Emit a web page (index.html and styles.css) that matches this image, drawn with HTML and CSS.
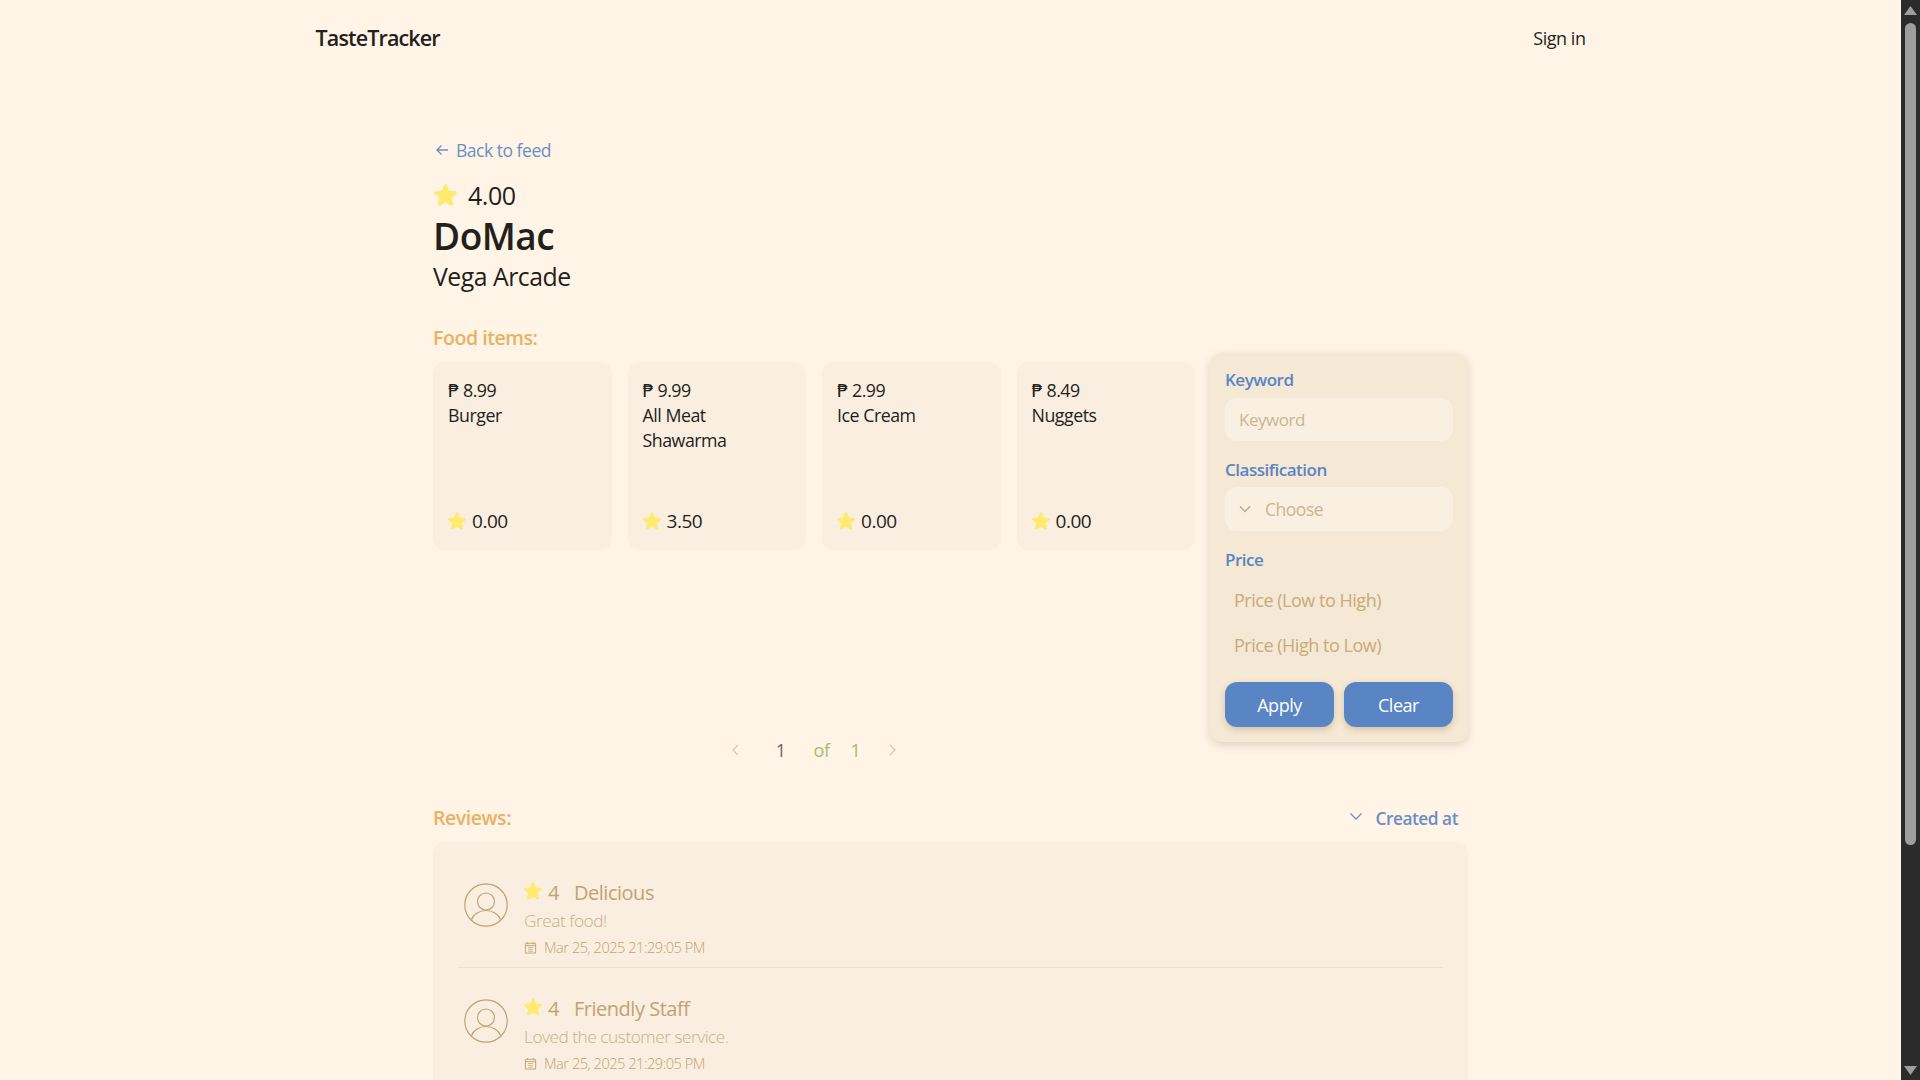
FILE: index.html
```html
<!DOCTYPE html>
<html lang="en">
<head>
    <meta charset="UTF-8">
    <title>TasteTracker</title>
    <link rel="stylesheet" href="styles.css">
</head>
<body>
    <svg class="sprite" xmlns="http://www.w3.org/2000/svg">
        <symbol id="star" viewBox="2 2.4 20 19.2">
            <path d="M10.788 3.21c.448-1.077 1.976-1.077 2.424 0l2.082 5.007 5.404.433c1.164.093 1.636 1.545.749 2.305l-4.117 3.527 1.257 5.273c.271 1.136-.964 2.033-1.96 1.425L12 18.354 7.373 21.18c-.996.608-2.231-.29-1.96-1.425l1.257-5.273-4.117-3.527c-.887-.76-.415-2.212.749-2.305l5.404-.433 2.082-5.006z" fill="#fdea6f"/>
        </symbol>
        <symbol id="user" viewBox="0 0 44 44">
            <circle cx="22" cy="22" r="21.200" fill="none" stroke="#c2a272" stroke-width="1.200"/>
            <circle cx="22" cy="18.500" r="8.500" fill="none" stroke="#c2a272" stroke-width="1.200"/>
            <path d="M7.500 36.500c2-5.500 8-9 14.500-9s12.500 3.500 14.500 9" fill="none" stroke="#c2a272" stroke-width="1.200"/>
        </symbol>
        <symbol id="calendar" viewBox="0 0 14 14">
            <path d="M1.500 2.500h11v10.500h-11zM1.500 5h11M4 1v2.500M10 1v2.500" fill="none" stroke="#c2a272" stroke-width="1"/>
            <path d="M4.500 7h5M4.500 9h5M4.500 11h5" fill="none" stroke="#c2a272" stroke-width=".8"/>
        </symbol>
    </svg>

    <div class="page">
        <!-- Top bar -->
        <header class="topbar">
            <div class="topbar-inner">
                <a class="brand">TasteTracker</a>
                <a class="signin">Sign in</a>
            </div>
        </header>

        <main class="content">
            <a class="back-link">
                <svg class="back-arrow" viewBox="0 0 16 16"><path d="M14 8H3M7.500 3.500L3 8l4.500 4.500" fill="none" stroke="#6a8ec6" stroke-width="1.300"/></svg>
                Back to feed
            </a>

            <div class="rating-big">
                <svg class="star-big"><use href="#star"/></svg>
                <span>4.00</span>
            </div>
            <h1 class="name">DoMac</h1>
            <div class="location">Vega Arcade</div>

            <h2 class="section-title food-title">Food items:</h2>

            <div class="food-row">
                <div class="food-col">
                    <div class="cards">
                        <div class="card">
                            <div class="card-text"><div>₱ 8.99</div><div>Burger</div></div>
                            <div class="card-rating"><svg class="star-small"><use href="#star"/></svg>0.00</div>
                        </div>
                        <div class="card">
                            <div class="card-text"><div>₱ 9.99</div><div>All Meat Shawarma</div></div>
                            <div class="card-rating"><svg class="star-small"><use href="#star"/></svg>3.50</div>
                        </div>
                        <div class="card">
                            <div class="card-text"><div>₱ 2.99</div><div>Ice Cream</div></div>
                            <div class="card-rating"><svg class="star-small"><use href="#star"/></svg>0.00</div>
                        </div>
                        <div class="card">
                            <div class="card-text"><div>₱ 8.49</div><div>Nuggets</div></div>
                            <div class="card-rating"><svg class="star-small"><use href="#star"/></svg>0.00</div>
                        </div>
                    </div>

                    <div class="pager">
                        <svg class="pager-arrow" viewBox="0 0 14 14"><path d="M9 2L4 7l5 5" fill="none" stroke="#d5c6a8" stroke-width="1.100"/></svg>
                        <span class="pager-current">1</span>
                        <span class="pager-of">of</span>
                        <span class="pager-total">1</span>
                        <svg class="pager-arrow" viewBox="0 0 14 14"><path d="M5 2l5 5-5 5" fill="none" stroke="#d5c6a8" stroke-width="1.100"/></svg>
                    </div>
                </div>

                <!-- Filter panel -->
                <aside class="filters">
                    <label class="filter-label">Keyword</label>
                    <div class="field">Keyword</div>
                    <label class="filter-label">Classification</label>
                    <div class="field field-select">
                        <svg class="select-arrow" viewBox="0 0 16 16"><path d="M3 5.500l5 5 5-5" fill="none" stroke="#bfa57c" stroke-width="1.300"/></svg>
                        Choose
                    </div>
                    <label class="filter-label">Price</label>
                    <div class="price-option">Price (Low to High)</div>
                    <div class="price-option">Price (High to Low)</div>
                    <div class="filter-buttons">
                        <button>Apply</button>
                        <button>Clear</button>
                    </div>
                </aside>
            </div>

            <div class="reviews-head">
                <h2 class="section-title">Reviews:</h2>
                <a class="sort">
                    <svg class="sort-arrow" viewBox="0 0 14 14"><path d="M1.500 4.500L7 10l5.500-5.500" fill="none" stroke="#6a8ec6" stroke-width="1.300"/></svg>
                    Created at
                </a>
            </div>

            <section class="reviews">
                <article class="review">
                    <svg class="avatar"><use href="#user"/></svg>
                    <div>
                        <div class="review-title">
                            <svg class="star-review"><use href="#star"/></svg>
                            <span class="review-score">4</span>
                            <span>Delicious</span>
                        </div>
                        <div class="review-text">Great food!</div>
                        <div class="review-date"><svg class="date-icon"><use href="#calendar"/></svg>Mar 25, 2025 21:29:05 PM</div>
                    </div>
                </article>
                <article class="review">
                    <svg class="avatar"><use href="#user"/></svg>
                    <div>
                        <div class="review-title">
                            <svg class="star-review"><use href="#star"/></svg>
                            <span class="review-score">4</span>
                            <span>Friendly Staff</span>
                        </div>
                        <div class="review-text">Loved the customer service.</div>
                        <div class="review-date"><svg class="date-icon"><use href="#calendar"/></svg>Mar 25, 2025 21:29:05 PM</div>
                    </div>
                </article>
            </section>
        </main>
    </div>

    <!-- Window scrollbar -->
    <div class="scrollbar">
        <svg class="scroll-btn" viewBox="0 0 13 9"><path d="M6.500 0L13 9H0z" fill="#9e9e9e"/></svg>
        <div class="scroll-track"><div class="scroll-thumb"></div></div>
        <svg class="scroll-btn" viewBox="0 0 13 9"><path d="M0 0h13L6.500 9z" fill="#9e9e9e"/></svg>
    </div>
</body>
</html>
```

FILE: styles.css
```css
/* Reset */
* {
    margin: 0;
    padding: 0;
    box-sizing: border-box;
}

body {
    font-family: "Open Sans", "DejaVu Sans", sans-serif;
    background-color: #fff4e6;
    color: #231f1c;
    display: flex;
    height: 100vh;
    overflow: hidden;
    letter-spacing: -0.03em;
}

.sprite {
    display: none;
}

.page {
    flex: 1;
    min-width: 0;
    overflow: hidden;
}

/* Top bar */
.topbar {
    height: 77px;
    border-bottom: 1px solid #fef2e4;
}

.topbar-inner {
    width: 1270px;
    height: 100%;
    margin: 0 auto;
    padding-bottom: 1px;
    display: flex;
    justify-content: space-between;
    align-items: center;
}

.brand {
    font-size: 21.5px;
    font-weight: 600;
    letter-spacing: -0.04em;
}

.signin {
    font-size: 18px;
}

/* Main column */
.content {
    width: 1035px;
    margin: 0 auto;
    padding-top: 61px;
}

.back-link {
    display: flex;
    align-items: center;
    gap: 6px;
    height: 24px;
    font-size: 17.5px;
    color: #6a8ec6;
}

.back-arrow {
    width: 16px;
    height: 16px;
    margin-left: 1px;
}

.rating-big {
    display: flex;
    align-items: center;
    gap: 11px;
    height: 34px;
    margin-top: 16px;
    font-size: 25px;
    font-weight: 500;
}

.star-big {
    width: 23px;
    height: 22px;
    margin-left: 1px;
}

.name {
    font-size: 37px;
    font-weight: 600;
    line-height: 44px;
    margin-top: 2px;
}

.location {
    font-size: 24.8px;
    line-height: 32px;
    margin-top: 2px;
}

.section-title {
    font-size: 19.6px;
    font-weight: 600;
    line-height: 28px;
    color: #e9b262;
}

.food-title {
    margin-top: 32px;
}

/* Food items + filter */
.food-row {
    display: flex;
    justify-content: space-between;
    align-items: flex-start;
    margin-top: 1px;
}

.food-col {
    width: 762px;
    height: 417px;
    padding-top: 9px;
    display: flex;
    flex-direction: column;
    justify-content: space-between;
}

.cards {
    display: grid;
    grid-template-columns: repeat(4, 1fr);
    gap: 16px;
}

.card {
    height: 188px;
    padding: 16px 15px;
    background-color: #faeee0;
    border-radius: 12px;
    display: flex;
    flex-direction: column;
    justify-content: space-between;
    font-size: 17.8px;
    font-weight: 500;
    line-height: 25px;
}

.card-rating {
    display: flex;
    align-items: center;
    gap: 6px;
    font-size: 19px;
    font-weight: 400;
    line-height: 27px;
    margin-bottom: -1px;
}

.star-small {
    width: 18px;
    height: 18px;
    margin-bottom: 2px;
}

.pager {
    display: flex;
    justify-content: center;
    align-items: center;
    height: 40px;
    font-size: 18px;
}

.pager-arrow {
    width: 14px;
    height: 14px;
}

.pager-current {
    margin: 0 28px 0 33px;
    color: #6b6862;
}

.pager-of {
    color: #9ebf73;
}

.pager-total {
    margin: 0 25px 0 21px;
    color: #9ebf73;
}

.filters {
    width: 258px;
    height: 389px;
    padding: 13px 15px 0;
    background-color: #f5e8d4;
    border-radius: 12px;
    box-shadow: 0 3px 8px rgba(120, 90, 50, 0.22);
}

.filter-label {
    display: block;
    height: 28px;
    line-height: 28px;
    font-size: 17px;
    font-weight: 600;
    color: #5a85c4;
}

.field {
    display: flex;
    align-items: center;
    height: 43px;
    margin: 4px 0 15px;
    padding: 0 14px;
    background-color: #faf0e1;
    border-radius: 12px;
    font-size: 17px;
    color: #cdb491;
}

.field-select {
    height: 44px;
    margin-top: 3px;
    padding-left: 12px;
    gap: 12px;
    font-size: 17.5px;
}

.select-arrow {
    width: 16px;
    height: 16px;
}

.price-option {
    height: 45px;
    line-height: 45px;
    padding-left: 9px;
    font-size: 18px;
    color: #c9aa7c;
}

.filter-label + .price-option {
    margin-top: 4px;
}

.filter-buttons {
    display: flex;
    gap: 10px;
    margin-top: 14px;
}

.filter-buttons button {
    flex: 1;
    height: 45px;
    border: none;
    border-radius: 12px;
    background-color: #5a85c4;
    color: #fff;
    font-family: inherit;
    font-size: 18px;
    letter-spacing: inherit;
    box-shadow: 0 3px 6px rgba(120, 90, 50, 0.25);
}

/* Reviews */
.reviews-head {
    display: flex;
    justify-content: space-between;
    align-items: center;
    margin-top: 34px;
    padding-right: 10px;
}

.sort {
    display: flex;
    align-items: center;
    gap: 13px;
    font-size: 17.3px;
    font-weight: 600;
    color: #6a8ec6;
}

.sort-arrow {
    width: 14px;
    height: 14px;
    margin-bottom: 4px;
}

.reviews {
    margin-top: 10px;
    padding: 10px 25px 20px;
    background-color: #faeee0;
    border-radius: 12px;
}

.review {
    display: flex;
    gap: 16px;
    padding: 27px 0 7px 6px;
    border-bottom: 1px solid #efe2cd;
}

.avatar {
    width: 44px;
    height: 44px;
    margin-top: 4px;
    flex-shrink: 0;
}

.review-title {
    display: flex;
    align-items: center;
    height: 28px;
    margin: -1px 0 1px;
    font-size: 20px;
    color: #c2a272;
}

.star-review {
    width: 18px;
    height: 18px;
    margin-bottom: 3px;
}

.review-score {
    margin: 0 15px 0 6px;
}

.review-text {
    font-size: 17.3px;
    font-weight: 300;
    line-height: 28px;
    color: #c9b08a;
}

.review-date {
    display: flex;
    align-items: center;
    gap: 7px;
    margin-top: -1px;
    font-size: 14.6px;
    font-weight: 300;
    line-height: 26px;
    color: #c2a272;
}

.date-icon {
    width: 13px;
    height: 13px;
}

/* Scrollbar */
.scrollbar {
    flex: 0 0 19px;
    height: 100%;
    padding: 6px 3px 5px;
    background-color: #2b2b2b;
    display: flex;
    flex-direction: column;
    align-items: center;
}

.scroll-btn {
    width: 13px;
    height: 9px;
    flex-shrink: 0;
}

.scroll-track {
    flex: 1;
    width: 11px;
    padding-top: 8px;
}

.scroll-thumb {
    width: 100%;
    height: 822px;
    background-color: #9e9e9e;
    border-radius: 6px;
}
```
